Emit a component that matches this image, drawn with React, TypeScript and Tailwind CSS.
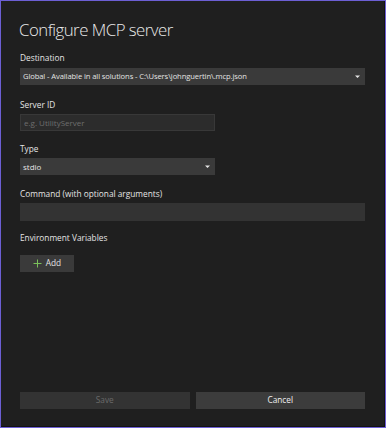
export default function App() {
  const Caret = () => (
    <svg width="5" height="3" viewBox="0 0 5 3" className="shrink-0">
      <path d="M0 0.5 L5 0.5 L2.5 3 Z" fill="#e6e6e6" />
    </svg>
  )

  return (
    <div
      className="w-[386px] h-[428px] bg-[#1f1f1f] border border-[#6c5fd4] text-[#e4e4e4] flex flex-col"
      style={{ fontFamily: '"Open Sans", "Noto Sans", sans-serif' }}
    >
      <div className="flex-1 flex flex-col border-r border-b border-[#121212] px-[19px]">
        <h1 className="mt-[16px] -ml-[1px] text-[16.8px] leading-[25px] text-[#eaeaea] tracking-[-0.5px] font-light">Configure MCP server</h1>

        <label className="mt-[10px] text-[8.3px] leading-[12px]">Destination</label>
        <div className="mt-[4px] h-[17px] bg-[#3a3a3a] flex items-center justify-between pl-[3px] pr-[5px] text-[7.6px] tracking-[-0.1px]">
          <span>Global - Available in all solutions - C:\Users\johnguertin\.mcp.json</span>
          <Caret />
        </div>

        <label className="mt-[14px] text-[8.3px] leading-[12px]">Server ID</label>
        <div className="mt-[3px] w-[195px] h-[17px] bg-[#2c2c2c] border border-[#383838] flex items-center pl-[3px] text-[8px] text-[#6e6e6e]">
          e.g. UtilityServer
        </div>

        <label className="mt-[12px] text-[8.3px] leading-[12px]">Type</label>
        <div className="mt-[3px] w-[195px] h-[17px] bg-[#3a3a3a] flex items-center justify-between pl-[3px] pr-[5px] text-[8px]">
          <span>stdio</span>
          <Caret />
        </div>

        <label className="mt-[13px] text-[8.3px] leading-[12px]">Command (with optional arguments)</label>
        <div className="mt-[3px] h-[18px] bg-[#333333]" />

        <label className="mt-[11px] text-[8.3px] leading-[12px]">Environment Variables</label>
        <button className="mt-[11px] w-[54px] h-[17px] bg-[#3a3a3a] flex items-center justify-center gap-[4px] text-[8.3px]">
          <svg width="9" height="9" viewBox="0 0 9 9">
            <path d="M4.5 0.5 V8.5 M0.5 4.5 H8.5" stroke="#7ac15a" strokeWidth="1" />
          </svg>
          <span>Add</span>
        </button>

        <div className="flex-1" />

        <div className="mb-[17px] flex gap-[6px]">
          <button className="flex-1 h-[17px] bg-[#333333] text-[8.3px] text-[#6a6a6a]">Save</button>
          <button className="flex-1 h-[17px] bg-[#3c3c3c] text-[8.3px] text-[#f0f0f0]">Cancel</button>
        </div>
      </div>
    </div>
  )
}
